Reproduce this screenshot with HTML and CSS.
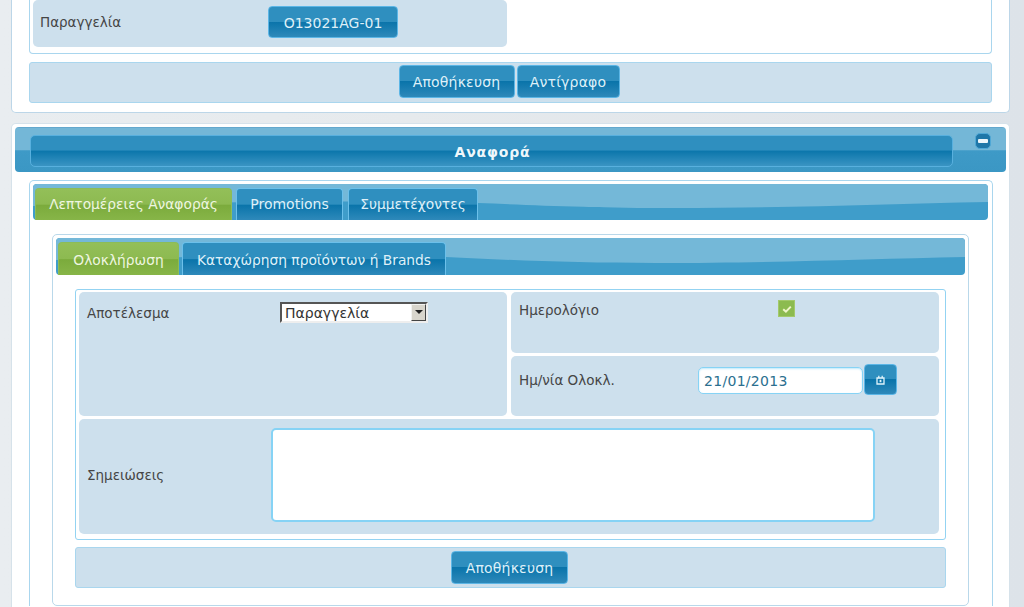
FILE: index.html
```
<!DOCTYPE html>
<html lang="el">
<head>
<meta charset="utf-8">
<title>Αναφορά</title>
<link rel="stylesheet" href="styles.css">
</head>
<body>
<section class="card card-top">
  <div class="box box-open">
    <div class="cell cell-order">
      <span class="label label-order">Παραγγελία</span>
      <button class="btn btn-order">O13021AG-01</button>
    </div>
  </div>
  <div class="actions actions-top">
    <button class="btn btn-save">Αποθήκευση</button>
    <button class="btn btn-copy">Αντίγραφο</button>
  </div>
</section>

<section class="card card-main">
  <header class="bar">
    <h1 class="bar-title">Αναφορά</h1>
    <button class="collapse" aria-label="Σύμπτυξη"><span class="collapse-dash"></span></button>
  </header>
  <div class="panel panel-outer">
    <nav class="strip strip-outer">
      <svg class="wave" viewBox="0 0 955 36" preserveAspectRatio="none" aria-hidden="true"><path d="M0 0H955V18C850 20 760 24 640 24C560 24 500 21 445 19C300 15 100 20 0 22Z" fill="#74b8d8"/></svg>
      <a class="tab tab-active tab-details">Λεπτομέρειες Αναφοράς</a>
      <a class="tab tab-promo">Promotions</a>
      <a class="tab tab-people">Συμμετέχοντες</a>
    </nav>
    <div class="panel panel-inner">
      <nav class="strip strip-inner">
        <svg class="wave" viewBox="0 0 909 37" preserveAspectRatio="none" aria-hidden="true"><path d="M0 0H909V19C810 21 720 25 600 25C520 25 450 22 390 19C260 15 90 20 0 22Z" fill="#74b8d8"/></svg>
        <a class="tab tab-active tab-done">Ολοκλήρωση</a>
        <a class="tab tab-brands">Καταχώρηση προϊόντων ή Brands</a>
      </nav>
      <div class="form">
        <div class="cell cell-result">
          <span class="label label-result">Αποτέλεσμα</span>
          <div class="select-wrap">
            <select class="select"><option>Παραγγελία</option></select>
            <span class="select-arrow"></span>
          </div>
        </div>
        <div class="cell cell-calendar">
          <span class="label label-calendar">Ημερολόγιο</span>
          <span class="check">
            <svg viewBox="0 0 10 10" width="10" height="10" aria-hidden="true"><path d="M1.2 5.2L3.9 7.6L8.8 2.6" fill="none" stroke="#eef5c8" stroke-width="2"/></svg>
          </span>
        </div>
        <div class="cell cell-date">
          <span class="label label-date">Ημ/νία Ολοκλ.</span>
          <input class="input-date" value="21/01/2013">
          <button class="btn btn-cal" aria-label="Ημερολόγιο">
            <svg viewBox="0 0 9 10" width="9" height="10" aria-hidden="true"><path d="M1 3H8V9H1Z" fill="none" stroke="#dff3fb" stroke-width="1.3"/><path d="M2.8 .8V3 M6.2 .8V3" fill="none" stroke="#dff3fb" stroke-width="1.3"/><rect x="3.6" y="4.8" width="1.8" height="2.4" fill="#dff3fb"/></svg>
          </button>
        </div>
        <div class="cell cell-notes">
          <span class="label label-notes">Σημειώσεις</span>
          <textarea class="notes"></textarea>
        </div>
      </div>
      <div class="actions actions-form">
        <button class="btn btn-save2">Αποθήκευση</button>
      </div>
    </div>
  </div>
</section>
</body>
</html>
```
FILE: styles.css
```
html, body {
  margin: 0;
  padding: 0;
  height: 607px;
  overflow: hidden;
}
body {
  background: linear-gradient(90deg, #e9edf0 0, #e6eaed 40%, #dde3e9 100%);
  font-family: "DejaVu Sans", sans-serif;
  font-size: 13.5px;
  color: #454545;
}
.card {
  box-sizing: border-box;
  width: 999px;
  margin-left: 11px;
  background: #fff;
  border: 1px solid #bcd6e8;
}
.card-top {
  height: 113px;
  border-top: 0;
  border-radius: 0 0 5px 5px;
  padding: 0 17px 0 17px;
}
.card-main {
  margin-top: 10px;
  height: 484px;
  border-bottom: 0;
  border-radius: 5px 5px 0 0;
  padding: 3px 3px 0 3px;
  border-color: #d6e2ea;
}
.box-open {
  box-sizing: border-box;
  height: 54px;
  border: 1px solid #a9d6ee;
  border-top: 0;
  border-radius: 0 0 4px 4px;
  padding-left: 3px;
}
.cell {
  position: relative;
  display: flex;
  box-sizing: border-box;
  background: #cde0ed;
  border-radius: 5px;
}
.cell-order {
  width: 474px;
  height: 47px;
  align-items: flex-start;
  padding: 6px 0 0 7px;
}
.label {
  display: block;
  white-space: nowrap;
}
.label-order {
  width: 228px;
  line-height: 33px;
}
.btn {
  box-sizing: border-box;
  height: 33px;
  margin: 0;
  padding: 1px 0 0;
  border: 1px solid #5cb6e6;
  border-radius: 4px;
  background: linear-gradient(180deg, #2f8fbf 0, #2f8fbf 49%, #0a74aa 50%, #2e89ba 100%);
  color: #dff0f8;
  font-family: "DejaVu Sans", sans-serif;
  font-size: 14px;
  letter-spacing: .2px;
}
.btn-order {
  width: 130px;
  height: 32px;
  letter-spacing: 0;
}
.actions {
  box-sizing: border-box;
  display: flex;
  justify-content: center;
  background: #cde0ed;
  border: 1px solid #a9d6ee;
  border-radius: 3px;
}
.actions-top {
  height: 41px;
  margin-top: 8px;
  padding: 2px 3px 0 0;
  gap: 2px;
}
.btn-save { width: 116px; }
.btn-copy { width: 103px; }
.bar {
  position: relative;
  display: block;
  box-sizing: border-box;
  width: 991px;
  height: 45px;
  padding: 8px 0 0 15px;
  border-radius: 4px;
  background: linear-gradient(180deg, #5b9fc8 0, #74b7d7 3%, #74b7d7 50%, #3e9ac7 53%, #3b97c4 100%);
}
.bar-title {
  box-sizing: border-box;
  width: 923px;
  height: 32px;
  margin: 0;
  padding: 1px 0 0 2px;
  border: 1px solid #58b0de;
  border-radius: 5px;
  background: linear-gradient(180deg, #2f8fbf 0, #2f8fbf 47%, #0b76ab 50%, #3a94c3 100%);
  color: #eef7fb;
  font-size: 14px;
  line-height: 30px;
  text-align: center;
  letter-spacing: .8px;
}
.collapse {
  position: absolute;
  top: 6px;
  left: 960px;
  width: 16px;
  height: 16px;
  padding: 0;
  border: 1px solid #4fa8d6;
  border-radius: 5px;
  background: #1f77a8;
}
.collapse-dash {
  display: block;
  width: 10px;
  height: 4px;
  margin: 0 auto;
  border-radius: 1px;
  background: #eef7fb;
}
.panel {
  box-sizing: border-box;
  background: #fff;
  border-radius: 5px;
}
.panel-outer {
  width: 964px;
  height: 426px;
  margin: 8px 0 0 14px;
  padding: 3px 3px 0;
  border: 1px solid #a9d6ee;
  border-bottom: 0;
  border-radius: 5px 5px 0 0;
}
.panel-inner {
  width: 917px;
  height: 372px;
  margin: 14px 0 0 19px;
  padding: 3px 3px 0;
  border: 1px solid #b9d8ea;
}
.strip {
  position: relative;
  display: flex;
  align-items: flex-end;
  box-sizing: border-box;
  border-radius: 4px;
  background: #3f9dca;
  padding-left: 2px;
}
.strip-outer {
  width: 955px;
  height: 36px;
}
.strip-inner {
  width: 909px;
  height: 37px;
}
.wave {
  position: absolute;
  inset: 0;
  width: 100%;
  height: 100%;
  border-radius: 4px;
}
.tab {
  position: relative;
  box-sizing: border-box;
  height: 32px;
  line-height: 31px;
  text-align: center;
  color: #dff0f8;
  font-size: 13.8px;
  white-space: nowrap;
  border: 1px solid #6cc0ea;
  border-bottom: 0;
  border-radius: 4px 4px 0 0;
  background: linear-gradient(180deg, #2f8fbf 0, #2f8fbf 49%, #0a74aa 52%, #2e89ba 100%);
}
.tab-active {
  border-color: #8cbc58;
  background: linear-gradient(180deg, #93bf58 0, #8dba51 49%, #7bab3c 52%, #87b548 100%);
  color: #eef6e0;
}
.tab-details { width: 197px; }
.tab-promo { width: 107px; margin-left: 4px; font-size: 14px; }
.tab-people { width: 130px; margin-left: 5px; }
.strip-inner .tab {
  height: 33px;
  line-height: 35px;
}
.tab-done { width: 121px; }
.tab-brands { width: 264px; margin-left: 3px; }
.form {
  box-sizing: border-box;
  display: grid;
  grid-template-columns: 428px 428px;
  grid-template-rows: 61px 60px 115px;
  column-gap: 4px;
  row-gap: 3px;
  width: 871px;
  height: 251px;
  margin: 14px 0 0 19px;
  padding: 2px 0 0 3px;
  border: 1px solid #93d3f2;
  border-radius: 3px;
}
.cell-result {
  grid-row: 1 / span 2;
  padding: 10px 0 0 8px;
  align-items: flex-start;
}
.label-result {
  width: 193px;
  line-height: 22px;
}
.select-wrap {
  position: relative;
  width: 148px;
  height: 21px;
}
.select {
  appearance: none;
  box-sizing: border-box;
  display: block;
  width: 148px;
  height: 21px;
  margin: 0;
  padding: 0 0 0 3px;
  border: 2px solid;
  border-color: #555 #eee #eee #555;
  border-radius: 0;
  background: #fff;
  color: #333;
  font-family: "DejaVu Sans", sans-serif;
  font-size: 14px;
}
.select-arrow {
  position: absolute;
  top: 2px;
  right: 2px;
  box-sizing: border-box;
  width: 15px;
  height: 17px;
  background: #d8d5cc;
  border: 1px solid;
  border-color: #f2f2f0 #444 #444 #f2f2f0;
}
.select-arrow::after {
  content: "";
  position: absolute;
  left: 3px;
  top: 5px;
  border: 4px solid transparent;
  border-top: 4px solid #222;
  border-bottom: 0;
}
.cell-calendar {
  padding: 8px 0 0 8px;
  align-items: flex-start;
}
.label-calendar {
  width: 259px;
  line-height: 20px;
}
.check {
  display: flex;
  align-items: center;
  justify-content: center;
  width: 17px;
  height: 17px;
  background: #8cbb4f;
  box-shadow: inset 0 0 0 1px #a3c96b;
}
.cell-date {
  padding: 8px 0 0 8px;
  align-items: flex-start;
}
.label-date {
  width: 179px;
  line-height: 32px;
}
.input-date {
  box-sizing: border-box;
  width: 165px;
  height: 27px;
  margin: 3px 1px 0 0;
  padding: 0 5px;
  border: 1px solid #86d3f5;
  border-radius: 5px;
  background: #fff;
  box-shadow: inset 0 1px 2px #bfe9fb;
  color: #2b6f8f;
  font-family: "DejaVu Sans", sans-serif;
  font-size: 14px;
  letter-spacing: .3px;
}
.btn-cal {
  display: flex;
  align-items: center;
  justify-content: center;
  width: 33px;
  height: 31px;
  padding: 0;
}
.cell-notes {
  grid-column: 1 / span 2;
  align-items: flex-start;
  padding: 9px 0 0 8px;
}
.label-notes {
  width: 184px;
  margin-top: 37px;
  line-height: 20px;
}
.notes {
  box-sizing: border-box;
  display: block;
  width: 604px;
  height: 94px;
  margin: 0;
  padding: 0;
  resize: none;
  border: 2px solid #86d3f5;
  border-radius: 5px;
  background: #fff;
}
.actions-form {
  width: 871px;
  height: 41px;
  margin: 7px 0 0 19px;
  padding: 3px 2px 0 0;
}
.btn-save2 { width: 117px; }
```
